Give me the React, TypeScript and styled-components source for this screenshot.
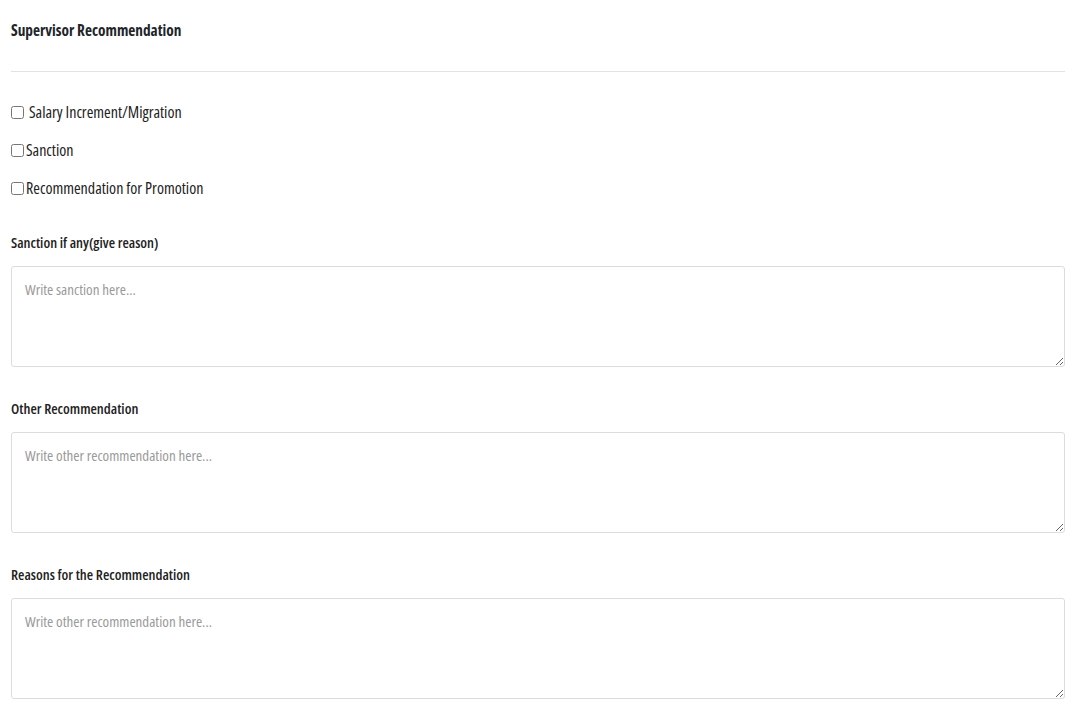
import React from "react";
import styled, { createGlobalStyle } from "styled-components";

const GlobalStyle = createGlobalStyle`
  body {
    margin: 0;
    background: #ffffff;
    font-family: "Open Sans", "Liberation Sans", sans-serif;
    font-stretch: 75%;
    color: #212529;
  }
`;

const Page = styled.div`
  padding: 0 15px 0 11px;
`;

const Heading = styled.h4`
  margin: 0;
  padding-top: 21px;
  font-size: 15.3px;
  font-weight: 700;
  line-height: 18px;
`;

const Divider = styled.hr`
  margin: 32px 0 0 0;
  border: none;
  border-top: 1px solid #e2e2e2;
`;

const CheckList = styled.div`
  display: flex;
  flex-direction: column;
  gap: 16px;
  margin-top: 29px;
`;

const CheckRow = styled.label<{ $spaced?: boolean }>`
  display: flex;
  align-items: center;
  gap: ${(p) => (p.$spaced ? "5px" : "2px")};
  font-size: 16px;
  line-height: 22px;
  color: #222;

  input {
    margin: 0;
    width: 13px;
    height: 13px;
  }
`;

const Field = styled.div`
  display: flex;
  flex-direction: column;
  gap: 15px;
  margin-top: 34px;

  & + & {
    margin-top: 32px;
  }
`;

const FieldLabel = styled.label`
  font-size: 14.6px;
  font-weight: 600;
  line-height: 18px;
  color: #222;
`;

const TextArea = styled.textarea`
  box-sizing: border-box;
  width: 100%;
  height: 101px;
  padding: 12px 13px;
  border: 1px solid #dcdcdc;
  border-radius: 3px;
  font-family: inherit;
  font-stretch: inherit;
  font-size: 15px;
  color: #333;
  resize: vertical;

  &::placeholder {
    color: #9a9a9a;
  }

  &:focus {
    outline: none;
    border-color: #bdbdbd;
  }
`;

const options = [
  { id: "salary", text: "Salary Increment/Migration", spaced: true },
  { id: "sanction", text: "Sanction", spaced: false },
  { id: "promotion", text: "Recommendation for Promotion", spaced: false },
];

const fields = [
  { id: "sanctionReason", label: "Sanction if any(give reason)", placeholder: "Write sanction here..." },
  { id: "otherRec", label: "Other Recommendation", placeholder: "Write other recommendation here..." },
  { id: "reasons", label: "Reasons for the Recommendation", placeholder: "Write other recommendation here..." },
];

const App: React.FC = () => {
  return (
    <>
      <GlobalStyle />
      <Page>
        <Heading>Supervisor Recommendation</Heading>
        <Divider />
        <CheckList>
          {options.map((o) => (
            <CheckRow key={o.id} $spaced={o.spaced}>
              <input type="checkbox" />
              {o.text}
            </CheckRow>
          ))}
        </CheckList>
        {fields.map((f) => (
          <Field key={f.id}>
            <FieldLabel htmlFor={f.id}>{f.label}</FieldLabel>
            <TextArea id={f.id} placeholder={f.placeholder} />
          </Field>
        ))}
      </Page>
    </>
  );
};

export default App;
